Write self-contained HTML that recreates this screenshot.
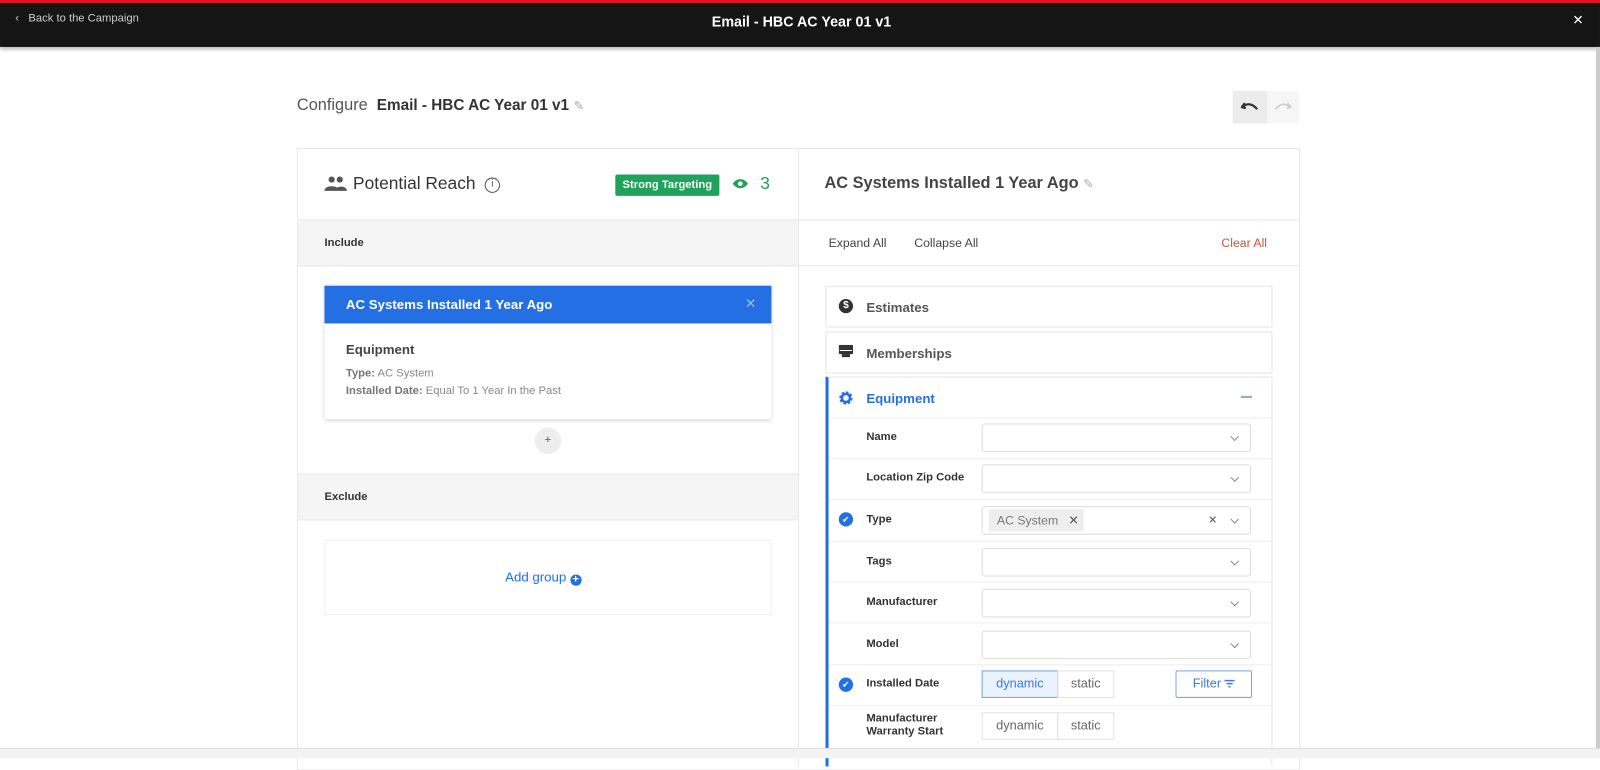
<!DOCTYPE html>
<html><head><style>
*{box-sizing:border-box;margin:0;padding:0}
body{width:1600px;height:751px;overflow:hidden;background:#fff;font-family:"Liberation Sans",sans-serif;color:#333;position:relative}
#w{position:absolute;left:0;top:0;width:1568px;height:736px;transform:scale(1.0204);transform-origin:0 0}
.a{position:absolute}
.top{left:0;top:0;width:1568px;height:46px;background:#151515;border-top:3px solid #e0141e;box-shadow:0 2px 4px rgba(0,0,0,.3)}
.lbl{font-size:11px;font-weight:bold;color:#333}
.sel{position:absolute;left:962px;width:264px;height:28px;border:1px solid #ddd;border-radius:3px;background:#fff}
.sel:after{content:"";position:absolute;right:12px;top:9px;width:5px;height:5px;border-right:1.3px solid #888;border-bottom:1.3px solid #888;transform:rotate(45deg)}
.hl{position:absolute;left:813px;width:433px;height:1px;background:#eee}
.seg{position:absolute;height:27px;border:1px solid #e2e2e2;font-size:12.5px;color:#666;text-align:center;line-height:25px}
</style></head><body><div id="w">
<div class="a top">
 <div class="a" style="left:15px;top:9px;color:#ccc;font-size:11px">‹&nbsp;&nbsp; Back to the Campaign</div>
 <div class="a" style="left:0;width:1571px;top:10px;text-align:center;color:#fff;font-size:14px;font-weight:bold">Email - HBC AC Year 01 v1</div>
 <div class="a" style="left:1541px;top:9px;color:#fff;font-size:13px">✕</div>
</div>
<div class="a" style="left:1564px;top:46px;width:4px;height:690px;background:#ccc"></div>
<div class="a" style="left:291px;top:95px;font-size:16px;color:#555">Configure &nbsp;<b style="color:#333;font-size:15px">Email - HBC AC Year 01 v1</b> <span style="color:#aaa;font-size:12px">✎</span></div>
<div class="a" style="left:1208px;top:89px;width:34px;height:32px;background:#ececec"></div>
<div class="a" style="left:1242px;top:89px;width:31px;height:32px;background:#f6f6f6"></div>
<svg class="a" style="left:1216px;top:98px" width="18" height="14"><path d="M4 3 L1 7 L5 8 M1.5 7 C6 3 11 3 16 9" stroke="#333" stroke-width="2.2" fill="none"/></svg>
<svg class="a" style="left:1248px;top:98px" width="18" height="14"><path d="M14 3 L17 7 L13 8 M16.5 7 C12 3 7 3 2 9" stroke="#ccc" stroke-width="1.5" fill="none"/></svg>
<div class="a" style="left:291px;top:145px;width:983px;height:610px;border:1px solid #e8e8e8"></div>
<div class="a" style="left:782px;top:145px;width:1px;height:606px;background:#e8e8e8"></div>
<svg class="a" style="left:318px;top:172px" width="22" height="16"><circle cx="7" cy="4" r="3" fill="#555"/><circle cx="15" cy="4" r="3" fill="#555"/><path d="M0 15 C0 9 14 9 14 15Z M10 15 C10 10 22 9 22 15Z" fill="#555"/></svg>
<div class="a" style="left:346px;top:170px;font-size:17px;color:#333">Potential Reach</div>
<div class="a" style="left:475px;top:174px;width:15px;height:15px;border:1.4px solid #555;border-radius:50%;font-size:10px;text-align:center;line-height:12px;color:#555">i</div>
<div class="a" style="left:603px;top:171px;width:102px;height:21px;background:#20a25a;border-radius:2px;color:#fff;font-size:11px;font-weight:bold;text-align:center;line-height:21px">Strong Targeting</div>
<svg class="a" style="left:718px;top:174px" width="15" height="12"><path d="M0 6 C4 0 11 0 15 6 C11 12 4 12 0 6Z" fill="#20a25a"/><circle cx="7.5" cy="6" r="2.3" fill="#fff"/></svg>
<div class="a" style="left:745px;top:170px;font-size:17px;color:#20a25a">3</div>
<div class="a" style="left:808px;top:171px;font-size:16px;font-weight:bold;color:#444">AC Systems Installed 1 Year Ago <span style="color:#aaa;font-size:12px;font-weight:normal">✎</span></div>
<div class="a" style="left:292px;top:215px;width:490px;height:46px;background:#f5f5f5;border-top:1px solid #e8e8e8;border-bottom:1px solid #e8e8e8"></div>
<div class="a lbl" style="left:318px;top:232px">Include</div>
<div class="a" style="left:783px;top:215px;width:490px;height:46px;border-top:1px solid #e8e8e8;border-bottom:1px solid #e8e8e8"></div>
<div class="a" style="left:812px;top:231px;font-size:12px;color:#444">Expand All</div>
<div class="a" style="left:896px;top:231px;font-size:12px;color:#444">Collapse All</div>
<div class="a" style="left:1197px;top:231px;font-size:12px;color:#c0533e">Clear All</div>
<div class="a" style="left:318px;top:280px;width:438px;height:131px;box-shadow:0 1px 4px rgba(0,0,0,.2);background:#fff"></div>
<div class="a" style="left:318px;top:280px;width:438px;height:37px;background:#236fe3;color:#fff;font-size:13px;font-weight:bold;padding:11px 0 0 21px">AC Systems Installed 1 Year Ago<span style="position:absolute;right:15px;top:10px;color:#9fc0f5;font-weight:normal">✕</span></div>
<div class="a" style="left:339px;top:335px;font-size:13px;font-weight:bold;color:#444">Equipment</div>
<div class="a" style="left:339px;top:358px;font-size:11px;color:#888;line-height:17px"><b style="color:#777">Type:</b> AC System<br><b style="color:#777">Installed Date:</b> Equal To 1 Year In the Past</div>
<div class="a" style="left:524px;top:419px;width:26px;height:26px;border-radius:50%;background:#eee;text-align:center;line-height:25px;font-size:11px;color:#555">+</div>
<div class="a" style="left:292px;top:464px;width:490px;height:46px;background:#f5f5f5;border-top:1px solid #e8e8e8;border-bottom:1px solid #e8e8e8"></div>
<div class="a lbl" style="left:318px;top:481px">Exclude</div>
<div class="a" style="left:318px;top:529px;width:438px;height:74px;border:1px solid #eee"></div>
<div class="a" style="left:495px;top:558px;font-size:13px;color:#236fe3">Add group <span style="display:inline-block;width:11px;height:11px;border-radius:50%;background:#236fe3;color:#fff;font-size:11px;line-height:10px;text-align:center;font-weight:bold;vertical-align:-1px">+</span></div>
<div class="a" style="left:809px;top:280px;width:438px;height:41px;border:1px solid #e5e5e5"></div>
<div class="a" style="left:822px;top:293px;width:14px;height:14px;border-radius:50%;background:#333;color:#fff;font-size:10px;font-weight:bold;text-align:center;line-height:14px">$</div>
<div class="a" style="left:849px;top:294px;font-size:13px;font-weight:bold;color:#555">Estimates</div>
<div class="a" style="left:809px;top:325px;width:438px;height:41px;border:1px solid #e5e5e5"></div>
<svg class="a" style="left:822px;top:338px" width="14" height="14"><rect x="0" y="0" width="14" height="9" rx="1" fill="#333"/><rect x="3" y="9" width="8" height="3" fill="#333"/><rect x="1" y="5" width="12" height="1" fill="#fff"/></svg>
<div class="a" style="left:849px;top:339px;font-size:13px;font-weight:bold;color:#555">Memberships</div>
<div class="a" style="left:809px;top:369px;width:438px;height:382px;border-top:1px solid #e5e5e5;border-right:1px solid #e5e5e5;border-left:3px solid #236fe3"></div>
<svg class="a" style="left:822px;top:383px" width="14" height="14" viewBox="0 0 14 14"><circle cx="7" cy="7" r="5" fill="none" stroke="#236fe3" stroke-width="3" stroke-dasharray="2.2 1.7"/><circle cx="7" cy="7" r="4" fill="none" stroke="#236fe3" stroke-width="2.5"/></svg>
<div class="a" style="left:849px;top:383px;font-size:13px;font-weight:bold;color:#236fe3">Equipment</div>
<div class="a" style="left:1216px;top:388px;width:11px;height:1.5px;background:#8aa9e0"></div>
<div class="hl" style="top:409px"></div>
<div class="a lbl" style="left:849px;top:422px">Name</div><div class="sel" style="top:415px"></div>
<div class="hl" style="top:449px"></div>
<div class="a lbl" style="left:849px;top:462px">Location Zip Code</div><div class="sel" style="top:455px"></div>
<div class="hl" style="top:489px"></div>
<div class="a" style="left:822px;top:502px;width:14px;height:14px;border-radius:50%;background:#236fe3;color:#fff;font-size:9px;text-align:center;line-height:14px">✔</div>
<div class="a lbl" style="left:849px;top:503px">Type</div><div class="sel" style="top:496px"></div>
<div class="a" style="left:969px;top:499px;width:93px;height:22px;background:#eee;font-size:12px;color:#777;padding:4px 0 0 8px">AC System &nbsp;&nbsp;<span style="color:#555">✕</span></div>
<div class="a" style="left:1184px;top:503px;font-size:11px;color:#555">✕</div>
<div class="hl" style="top:530px"></div>
<div class="a lbl" style="left:849px;top:544px">Tags</div><div class="sel" style="top:537px"></div>
<div class="hl" style="top:570px"></div>
<div class="a lbl" style="left:849px;top:584px">Manufacturer</div><div class="sel" style="top:577px"></div>
<div class="hl" style="top:610px"></div>
<div class="a lbl" style="left:849px;top:625px">Model</div><div class="sel" style="top:618px"></div>
<div class="hl" style="top:651px"></div>
<div class="a" style="left:822px;top:664px;width:14px;height:14px;border-radius:50%;background:#236fe3;color:#fff;font-size:9px;text-align:center;line-height:14px">✔</div>
<div class="a lbl" style="left:849px;top:664px">Installed Date</div>
<div class="seg" style="left:962px;top:657px;width:75px;background:#eaf2fd;border-color:#7aa4e6;color:#3e78dd">dynamic</div>
<div class="seg" style="left:1036px;top:657px;width:56px">static</div>
<div class="seg" style="left:1152px;top:657px;width:75px;border-color:#7aa4e6;color:#3e78dd;border-radius:2px">Filter <svg width="10" height="8" style="vertical-align:0"><path d="M0 1h10M2 4h6M4 7h2" stroke="#3e78dd" stroke-width="1.5"/></svg></div>
<div class="hl" style="top:691px"></div>
<div class="a lbl" style="left:849px;top:698px;line-height:13px">Manufacturer<br>Warranty Start</div>
<div class="seg" style="left:962px;top:698px;width:75px">dynamic</div>
<div class="seg" style="left:1036px;top:698px;width:56px">static</div>
<div class="a" style="left:0;top:733px;width:1568px;height:10px;background:#f3f3f3;border-top:1px solid #ddd"></div>
</div></body></html>
